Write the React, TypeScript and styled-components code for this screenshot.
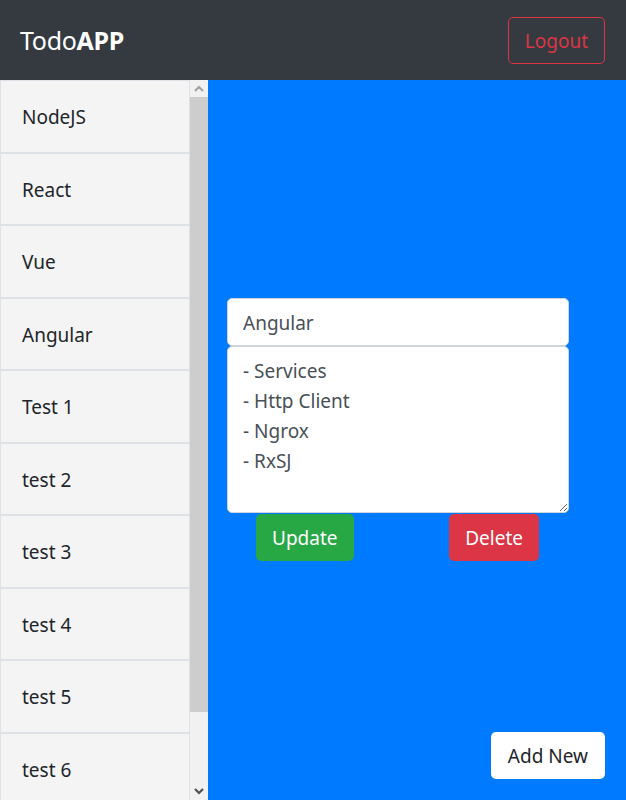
import React from "react";
import styled, { createGlobalStyle } from "styled-components";

const Global = createGlobalStyle`
  html, body { margin: 0; padding: 0; height: 100%; overflow: hidden; }
  body { font-family: "Noto Sans", "Open Sans", "DejaVu Sans", sans-serif; color: #212529; }
  * { box-sizing: border-box; }
`;

const Page = styled.div`
  display: flex;
  flex-direction: column;
  height: 100vh;
`;

const Navbar = styled.header`
  height: 80px;
  flex: none;
  background: #343a40;
  display: flex;
  align-items: center;
  justify-content: space-between;
  padding: 0 21px 0 20px;
`;

const Brand = styled.div`
  color: #fff;
  font-size: 25px;
  letter-spacing: -0.3px;
  b { font-weight: 700; }
`;

const OutlineButton = styled.button`
  font-family: inherit;
  font-size: 19px;
  height: 47px;
  padding: 1px 16px 0;
  background: transparent;
  color: #dc3545;
  border: 1px solid #dc3545;
  border-radius: 5px;
`;

const Body = styled.div`
  flex: 1;
  display: flex;
  min-height: 0;
`;

const Sidebar = styled.nav`
  width: 208px;
  flex: none;
  display: flex;
  background: #f1f1f1;
`;

const List = styled.div`
  flex: 1;
  overflow: hidden;
`;

const Rail = styled.div`
  width: 18px;
  flex: none;
  display: flex;
  flex-direction: column;
  background: #f1f1f1;
`;

const RailButton = styled.div`
  height: 17px;
  flex: none;
  display: flex;
  align-items: center;
  justify-content: center;
`;

const Thumb = styled.div`
  height: 615px;
  flex: none;
  background: #cdcdcd;
`;

const Track = styled.div`
  flex: 1;
`;

const Item = styled.div`
  background: #f4f4f4;
  border: 1px solid #dee2e6;
  padding: 21.25px 20px 19.25px 21px;
  font-size: 19px;
  line-height: 30px;
  color: #212529;
  white-space: nowrap;
`;

const Main = styled.main`
  flex: 1;
  background: #007bff;
  display: flex;
  flex-direction: column;
  padding: 218px 21px 21px 19px;
`;

const Form = styled.form`
  width: 342px;
  display: flex;
  flex-direction: column;
`;

const TitleInput = styled.input`
  font-family: inherit;
  height: 48px;
  font-size: 19px;
  padding: 1px 15px 0;
  color: #495057;
  border: 1px solid #ced4da;
  border-radius: 5px;
  outline: none;
`;

const Notes = styled.textarea`
  font-family: inherit;
  height: 167px;
  font-size: 19px;
  line-height: 30px;
  padding: 9px 15px 6px;
  color: #495057;
  border: 1px solid #ced4da;
  border-radius: 5px;
  resize: vertical;
  outline: none;
`;

const Actions = styled.div`
  display: flex;
  justify-content: space-between;
  padding: 1px 30px 0 29px;
`;

const SolidButton = styled.button<{ $bg: string }>`
  font-family: inherit;
  font-size: 19px;
  height: 47px;
  padding: 1px 16px 0;
  background: ${(p) => p.$bg};
  color: #fff;
  border: none;
  border-radius: 5px;
`;

const Footer = styled.div`
  margin-top: auto;
  display: flex;
  justify-content: flex-end;
`;

const AddButton = styled.button`
  font-family: inherit;
  font-size: 19px;
  height: 47px;
  padding: 1px 17px 0;
  background: #fff;
  color: #212529;
  border: none;
  border-radius: 5px;
`;

const Chevron = ({ up, color }: { up?: boolean; color: string }) => (
  <svg width="10" height="7" viewBox="0 0 10 7">
    <path
      d={up ? "M1 6 L5 2 L9 6" : "M1 1 L5 5 L9 1"}
      fill="none"
      stroke={color}
      strokeWidth="2.2"
    />
  </svg>
);

const items = ["NodeJS", "React", "Vue", "Angular", "Test 1", "test 2", "test 3", "test 4", "test 5", "test 6", "test 7"];

export default function App() {
  return (
    <Page>
      <Global />
      <Navbar>
        <Brand>
          Todo<b>APP</b>
        </Brand>
        <OutlineButton>Logout</OutlineButton>
      </Navbar>
      <Body>
        <Sidebar>
          <List>
            {items.map((t) => (
              <Item key={t}>{t}</Item>
            ))}
          </List>
          <Rail>
            <RailButton>
              <Chevron up color="#a3a3a3" />
            </RailButton>
            <Thumb />
            <Track />
            <RailButton>
              <Chevron color="#505050" />
            </RailButton>
          </Rail>
        </Sidebar>
        <Main>
          <Form>
            <TitleInput defaultValue="Angular" />
            <Notes defaultValue={"- Services\n- Http Client\n- Ngrox\n- RxSJ"} />
            <Actions>
              <SolidButton type="button" $bg="#28a745">Update</SolidButton>
              <SolidButton type="button" $bg="#dc3545">Delete</SolidButton>
            </Actions>
          </Form>
          <Footer>
            <AddButton>Add New</AddButton>
          </Footer>
        </Main>
      </Body>
    </Page>
  );
}
